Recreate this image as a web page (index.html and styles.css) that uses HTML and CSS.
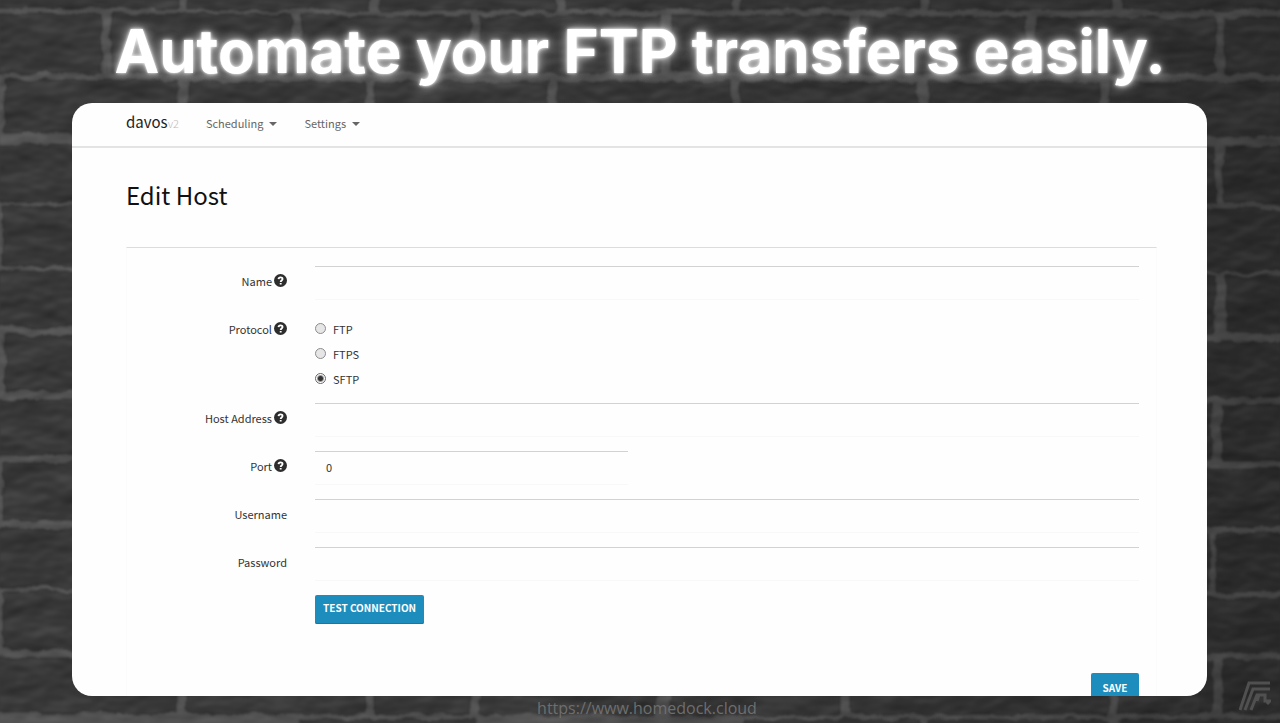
FILE: index.html
```html
<!DOCTYPE html>
<html lang="en">
<head>
<meta charset="utf-8">
<meta name="viewport" content="width=device-width, initial-scale=1">
<title>davos - Edit Host</title>
<link rel="stylesheet" href="styles.css">
</head>
<body>
<svg class="wall" viewBox="0 0 1280 723" preserveAspectRatio="none" aria-hidden="true">
  <defs>
    <filter id="rough" x="0" y="0" width="100%" height="100%" color-interpolation-filters="sRGB">
      <feTurbulence type="fractalNoise" baseFrequency="0.05" numOctaves="3" seed="4" result="n"/>
      <feDisplacementMap in="SourceGraphic" in2="n" scale="9" xChannelSelector="R" yChannelSelector="G" result="d"/>
      <feGaussianBlur in="d" stdDeviation="1"/>
    </filter>
    <filter id="stone" x="0" y="0" width="100%" height="100%" color-interpolation-filters="sRGB">
      <feTurbulence type="fractalNoise" baseFrequency="0.02 0.035" numOctaves="3" seed="9" result="n"/>
      <feDiffuseLighting in="n" surfaceScale="4" lighting-color="#ffffff" result="l"><feDistantLight azimuth="250" elevation="30"/></feDiffuseLighting>
      <feGaussianBlur in="l" stdDeviation="1"/>
    </filter>
    <linearGradient id="shade" x1="0" x2="1"><stop offset="0.4" stop-color="#000" stop-opacity="0"/><stop offset="1" stop-color="#000" stop-opacity="0.2"/></linearGradient>
  </defs>
  <rect width="1280" height="723" fill="#525252"/>
  <g filter="url(#rough)" fill="#383838" stroke="#303030" stroke-width="1" stroke-linejoin="round">
    <path d="M-9-9H179V8H-9zM189-9H370V10H189zM381-9H555V10H381zM565-9H732V9H565zM742-9H920V9H742zM930-9H1112V10H930zM1122-9H1290V10H1122z"/>
    <path d="M-9 14H101V73H-9zM111 14H292V73H111zM302 16H470V73H302zM480 16H660V73H480zM670 16H850V73H670zM860 17H1027V73H860zM1037 18H1215V73H1037zM1225 18H1290V74H1225z"/>
    <path d="M4 80H177V133H4zM187 82H365V133H187zM375 82H548V133H375zM558 82H731V133H558zM741 82H918V133H741zM928 82H1100V133H928zM1110 82H1290V136H1110z"/>
    <path d="M-9 144H90V202H-9zM3 207H90V266H3zM-9 271H90V327H-9zM6 336H90V391H6zM-9 400H90V455H-9zM3 463H90V520H3zM-9 529H90V587H-9zM3 592H90V649H3zM-9 658H177V713H-9z"/>
    <path fill="#353535" d="M1190 147H1215V203H1190zM1224 147H1290V203H1224zM1190 210H1290V271H1190zM1190 276H1215V333H1190zM1226 276H1290V333H1226zM1190 342H1290V397H1190zM1190 404H1212V461H1190zM1222 404H1290V461H1222zM1190 469H1290V527H1190zM1190 534H1209V591H1190zM1216 534H1290V591H1216zM1190 598H1290V652H1190zM1190 660H1213V713H1190zM1223 660H1290V714H1223z"/>
    <path d="M187 670H365V713H187zM375 670H470V714H375zM480 670H655V715H480zM671 670H840V715H671zM850 670H1108V714H850zM1118 670H1200V714H1118z"/>
    <path d="M300 720H475V740H300zM745 720H920V740H745zM930 720H1110V740H930zM1120 720H1290V740H1120z"/>
  </g>
  <rect class="grain" width="1280" height="723" filter="url(#stone)"/>
  <rect width="1280" height="723" fill="url(#shade)"/>
</svg>

<h1 class="headline">Automate your FTP transfers easily.</h1>

<main class="card">
  <nav class="navbar">
    <a class="brand" href="#">davos<span class="version">v2</span></a>
    <button class="menu" type="button">Scheduling<span class="caret"></span></button>
    <button class="menu" type="button">Settings<span class="caret"></span></button>
  </nav>
  <section class="content">
    <h2 class="page-title">Edit Host</h2>
    <form class="panel">
      <label class="label" for="name">Name <svg class="help" viewBox="0 0 14 14"><circle cx="7" cy="7" r="7"/><path d="M4.9 5.500C5 3 9.200 3 9.200 5.400 9.200 6.900 7.200 6.900 7.200 8.500M7.200 9.600v1.800"/></svg></label>
      <input class="field" id="name" type="text">

      <span class="label" id="protocol">Protocol <svg class="help" viewBox="0 0 14 14"><circle cx="7" cy="7" r="7"/><path d="M4.9 5.500C5 3 9.200 3 9.200 5.400 9.200 6.900 7.200 6.900 7.200 8.500M7.200 9.600v1.800"/></svg></span>
      <div class="options" role="radiogroup" aria-labelledby="protocol">
        <label class="option"><input class="radio" type="radio" name="protocol">FTP</label>
        <label class="option"><input class="radio" type="radio" name="protocol">FTPS</label>
        <label class="option"><input class="radio" type="radio" name="protocol" checked>SFTP</label>
      </div>

      <label class="label" for="host">Host Address <svg class="help" viewBox="0 0 14 14"><circle cx="7" cy="7" r="7"/><path d="M4.9 5.500C5 3 9.200 3 9.200 5.400 9.200 6.900 7.200 6.900 7.200 8.500M7.200 9.600v1.800"/></svg></label>
      <input class="field" id="host" type="text">

      <label class="label" for="port">Port <svg class="help" viewBox="0 0 14 14"><circle cx="7" cy="7" r="7"/><path d="M4.9 5.500C5 3 9.200 3 9.200 5.400 9.200 6.900 7.200 6.900 7.200 8.500M7.200 9.600v1.800"/></svg></label>
      <input class="field short" id="port" type="text" value="0">

      <label class="label" for="user">Username</label>
      <input class="field" id="user" type="text">

      <label class="label" for="pass">Password</label>
      <input class="field" id="pass" type="password">

      <button class="button test" type="button">TEST CONNECTION</button>
      <button class="button save" type="submit">SAVE</button>
    </form>
  </section>
</main>

<footer class="footer"><a class="site" href="https://www.homedock.cloud">https://www.homedock.cloud</a></footer>
<svg class="mark" viewBox="0 0 32 30" aria-hidden="true"><path d="M1 29 10 2H31M6 29 14 8H31M12 29 18 14H26V20H31L28 23M20 14 18 20"/></svg>
</body>
</html>
```
FILE: styles.css
```css
* { box-sizing: border-box; }
body {
  margin: 0;
  height: 100vh;
  display: grid;
  grid-template-rows: 103px minmax(0, 1fr) 27px;
  overflow: hidden;
  background: #3a3a3a;
  color: #333;
  font: 11px/20px "Noto Sans CJK SC", "Noto Sans", sans-serif;
}
.wall {
  position: absolute;
  inset: 0;
  width: 100%;
  height: 100%;
  z-index: -1;
}
.grain { mix-blend-mode: soft-light; opacity: 0.4; }
.headline {
  margin: 0;
  text-align: center;
  color: #fff;
  font: 700 60px/102px Inter, sans-serif;
  white-space: nowrap;
  text-shadow: 0 0 3px #fff, 0 0 8px rgba(255, 255, 255, 0.8), 0 0 16px rgba(255, 255, 255, 0.4);
}
.card {
  margin: 0 73px 0 72px;
  overflow: hidden;
  border-radius: 20px;
  background: #fefefe;
}
.navbar {
  display: flex;
  align-items: center;
  height: 45px;
  padding: 0 54px 4px;
  border-bottom: 2px solid #e3e5e5;
}
.brand {
  margin-right: 27px;
  color: #222;
  font-size: 15px;
  text-decoration: none;
}
.version { color: #bbb; font-size: 11px; font-weight: 300; }
.menu {
  display: flex;
  align-items: center;
  gap: 6px;
  margin-right: 27px;
  padding: 0;
  border: 0;
  background: none;
  color: #666;
  font: inherit;
}
.caret {
  margin-top: 3px;
  border: 4px solid transparent;
  border-top-color: #666;
  border-bottom: 0;
}
.content { padding: 27px 50px 0 54px; }
.page-title {
  margin: 0 0 32px;
  color: #111;
  font-size: 24px;
  font-weight: 400;
  line-height: 40px;
}
.panel {
  display: grid;
  grid-template-columns: 160px minmax(0, 1fr);
  gap: 14px 28px;
  padding: 18px 17px 40px 0;
  border: 1px solid #fbfbfb;
  border-top-color: #dcdcdc;
}
.label {
  display: flex;
  justify-content: flex-end;
  align-items: center;
  gap: 2px;
  height: 30px;
}
.help { width: 13px; height: 13px; margin-bottom: 2px; fill: #2d2d2d; }
.help path { fill: none; stroke: #fff; stroke-width: 2; }
.field {
  width: 100%;
  height: 34px;
  padding: 0 11px 3px;
  border: 0;
  border-top: 1px solid #d2d2d2;
  border-bottom: 1px solid #f8f8f8;
  background: none;
  color: #333;
  font: inherit;
}
.short { width: 38%; }
.options { display: grid; gap: 6px; padding: 5px 0 1px; }
.option { display: flex; align-items: center; gap: 7px; height: 19px; }
.radio {
  appearance: none;
  width: 11px;
  height: 11px;
  margin: 0;
  border: 1px solid #8c8c8c;
  border-radius: 50%;
  background: #e6e6e6;
}
.radio:checked { background: radial-gradient(circle, #333 0 2px, #fff 4px); border-color: #666; }
.button {
  height: 29px;
  padding: 0 8px 3px;
  border: 0;
  border-radius: 2px;
  background: #1c8dbc;
  box-shadow: inset 0 -1px #1779a2;
  color: #fff;
  font: 700 10px/20px "Noto Sans CJK SC", "Noto Sans", sans-serif;
}
.test { grid-column: 2; justify-self: start; }
.save { grid-column: 2; justify-self: end; width: 48px; height: 32px; margin-top: 35px; padding-bottom: 2px; }
.footer { text-align: center; }
.site {
  color: #6e6e6e;
  font: 400 16px/25px "Open Sans", sans-serif;
  text-decoration: none;
  margin-left: 14px;
}
.mark {
  position: absolute;
  right: 9px;
  bottom: 12px;
  width: 32px;
  height: 30px;
  fill: none;
  stroke: #505050;
  stroke-width: 3;
}
```
